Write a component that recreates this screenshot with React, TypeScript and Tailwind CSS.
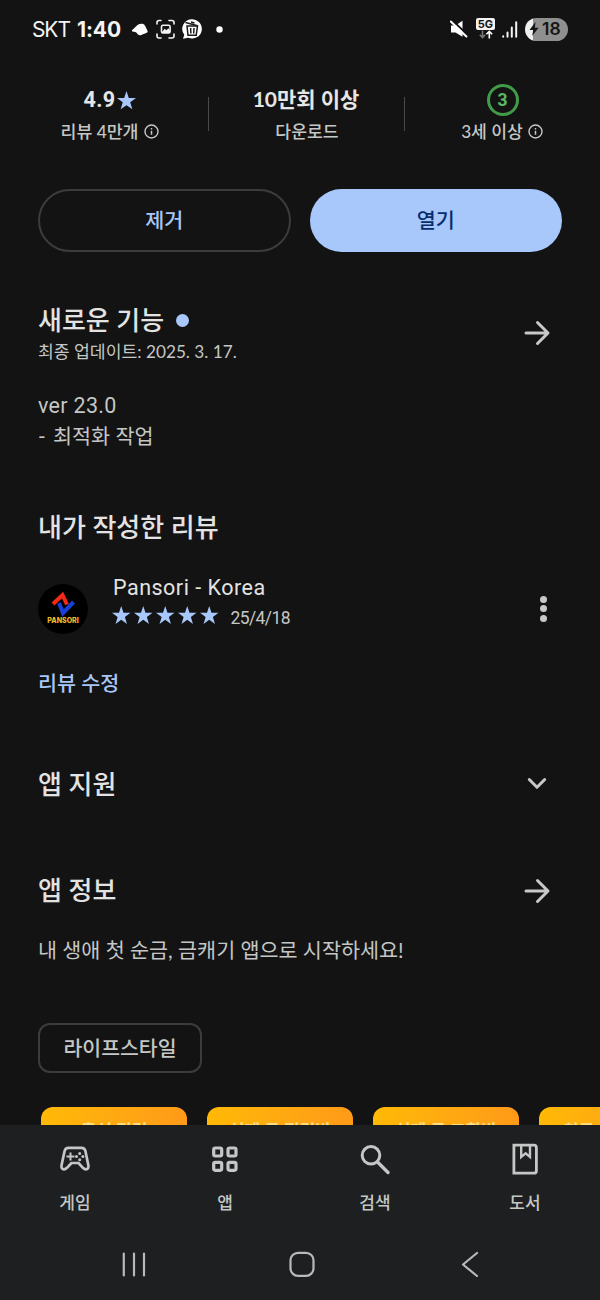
import React from 'react';

const STAR = 'M12 0l2.9 8.7 9.1.1-7.3 5.5 2.7 8.9-7.4-5.3-7.4 5.3 2.7-8.9L0 8.8l9.1-.1z';

const Star: React.FC<{ size: number }> = ({ size }) => (
  <svg width={size} height={size} viewBox="0 0 24 24" fill="#a8c7fa">
    <path d={STAR} />
  </svg>
);

const InfoIcon: React.FC = () => (
  <svg width="15" height="15" viewBox="0 0 15 15" fill="none" stroke="#c4c7c5">
    <circle cx="7.5" cy="7.5" r="6.5" strokeWidth="1.4" />
    <path d="M7.5 6.7v4.1M7.5 4v1.5" strokeWidth="1.5" />
  </svg>
);

const ArrowIcon: React.FC = () => (
  <svg width="28" height="28" viewBox="0 0 28 28" fill="none" stroke="#c8c8c8" strokeWidth="3" strokeLinecap="round" strokeLinejoin="round">
    <path d="M3 14h21M14.5 3.5L25 14 14.5 24.5" />
  </svg>
);

const StatusBar: React.FC = () => (
  <div className="h-[58px] flex items-center justify-between px-8 text-[#f4f4f4]">
    <div className="flex items-center">
      <span className="font-['Inter',sans-serif] text-[21px] tracking-[-1.1px] w-[45px] mt-px">SKT</span>
      <span className="font-['Inter',sans-serif] text-[21px] font-bold w-[54px] tracking-[-0.1px] mt-px">1:40</span>
      {/* Notification icons */}
      <svg width="92" height="24" viewBox="0 0 92 24" className="-mt-px">
        <path d="M1 13.2L6.5 8q2.5-1.6 5-1.3 1.9.3 2.7 2.3l2.4 5q.4 1.2-.8 1.8l-5.6 2.3q-2 .6-3.2-.5L5 15.3l-3.4-.8q-1.2-.4-.6-1.3z" fill="#fff" />
        <g fill="none" stroke="#f4f4f4" strokeWidth="1.6" strokeLinecap="round">
          <path d="M26 7V5.5q0-2 2-2h2M38 3.5h3q2 0 2 2V7M26 17v2q0 2 2 2h2M38 21h3q2 0 2-2v-2" />
          <rect x="30.5" y="8.2" width="8.6" height="7.8" rx="1.5" />
        </g>
        <path d="M31 15l2.7-3.3 1.7 1.6 2-2 1.6 2.2V16h-8z" fill="#f4f4f4" />
        <path d="M60.2 2.3a9.8 9.6 0 11-3 18.4l-5.2 1 1.3-4A9.8 9.6 0 0160.2 2.3z" fill="#fff" />
        <g fill="none" stroke="#1b1b1b" strokeWidth="1.5">
          <path d="M56 9l1 9.3h8.2l1.3-9.3z" />
          <path d="M54.5 5.5l12 3.3M60 5l3.5 1M59.6 11l.3 5.5M63 11l-.3 5.5" />
        </g>
        <circle cx="88.5" cy="12.5" r="3.2" fill="#fff" />
      </svg>
    </div>
    <div className="flex items-center">
      <svg width="18" height="18" viewBox="0 0 18 18" className="mr-[8px]">
        <path d="M1 5.500h4.500L12.500.8v16L5.500 12.500H1z" fill="#fff" />
        <path d="M1.500-.5l16.500 16" stroke="#131313" strokeWidth="2" />
        <path d="M.8 1.5l15.6 15" stroke="#fff" strokeWidth="2" strokeLinecap="round" />
      </svg>
      <div className="flex flex-col items-center w-[19px] h-[22px] mr-[7px]">
        <span className="w-[19px] h-[12px] rounded-[2px] bg-[#f4f4f4] text-[#151515] font-['Inter',sans-serif] font-bold text-[11px] leading-[12px] text-center">5G</span>
        <svg width="14" height="9" viewBox="0 0 14 9" fill="none" strokeWidth="1.6">
          <path d="M3.5.5v7M.8 4.8l2.7 2.9 2.7-2.9" stroke="#777" />
          <path d="M10.3 8.5v-7M7.4 4.3l2.9-2.9 2.9 2.9" stroke="#fff" />
        </svg>
      </div>
      <svg width="16" height="17" viewBox="0 0 16 17" stroke="#f4f4f4" strokeWidth="2" strokeLinecap="round" className="mr-[7px]">
        <path d="M1.2 15.2v.5M5.5 11.5v4.2M9.8 6.5v9.2M14.2 1.2v14.5" />
      </svg>
      <div className="w-[43px] h-[23px] rounded-full bg-linear-to-r from-[#efefef] from-18% to-[#8f8f8f] to-18% flex items-center pl-[4px]">
        <svg width="10" height="14" viewBox="0 0 10 14">
          <path d="M6.5 0L.5 8h3.7l-1 6L9.5 5.8H5.8z" fill="#151515" />
        </svg>
        <span className="font-['Inter',sans-serif] font-semibold text-[17.5px] leading-none text-[#151515] ml-[3px]">18</span>
      </div>
    </div>
  </div>
);

const Stats: React.FC = () => (
  <div className="h-[131px] pl-3 pt-[26px] flex text-[#c4c7c5]">
    <div className="w-[196px] flex flex-col items-center">
      <div className="h-8 flex items-center gap-[2px] text-[21.5px] font-bold text-[#e6e6e6]">
        <span className="font-['Roboto',sans-serif] tracking-[0.3px]">4.9</span>
        <Star size={19} />
      </div>
      <div className="h-[31px] flex items-center gap-[6px] text-[17.3px] font-medium">리뷰 4만개 <InfoIcon /></div>
    </div>
    <div className="w-px h-[34px] mt-[13px] -mr-px bg-[#4a4a4a]" />
    <div className="w-[196px] flex flex-col items-center">
      <div className="h-8 flex items-center -mt-px mb-px text-[21px] font-bold text-[#e6e6e6]">10만회 이상</div>
      <div className="h-[31px] flex items-center pl-[2px] text-[17.2px] font-medium">다운로드</div>
    </div>
    <div className="w-px h-[34px] mt-[13px] -mr-px bg-[#4a4a4a]" />
    <div className="w-[196px] flex flex-col items-center">
      <div className="h-8 flex items-center">
        <div className="w-8 h-8 ml-px rounded-full border-[3px] border-[#429b46] text-[#5bb763] font-['Roboto',sans-serif] text-[17.5px] font-bold flex items-center justify-center">3</div>
      </div>
      <div className="h-[31px] flex items-center gap-[5px] text-[17.2px] font-medium">3세 이상 <InfoIcon /></div>
    </div>
  </div>
);

const PANELS = ['출석 적립', '실제 금 적립방', '실제 금 교환방', '친구 초대하기'];

const NAV_ITEMS = [
  {
    label: '게임',
    icon: (
      <>
        <path d="M10.5 5.8h13q3.2 0 3.9 3.2l3 14.5q.5 3.7-2.5 3.8-1.5 0-3-1.5L20.5 21h-7L9 25.8q-1.5 1.5-3 1.5-3-.1-2.5-3.8L6.6 9q.7-3.2 3.9-3.2z" strokeWidth="2.7" strokeLinejoin="round" />
        <path d="M8.5 14.600h8M12.5 10.600v8" strokeWidth="2" />
        <g fill="#c4c7c5" stroke="none">
          <circle cx="21.7" cy="11.5" r="1.5" />
          <circle cx="18.5" cy="14.6" r="1.5" />
          <circle cx="24.9" cy="14.6" r="1.5" />
          <circle cx="21.7" cy="17.7" r="1.5" />
        </g>
      </>
    ),
  },
  {
    label: '앱',
    icon: (
      <g strokeWidth="3.2">
        <rect x="5.7" y="6" width="8" height="8" rx="1.7" />
        <rect x="20" y="6" width="8" height="8" rx="1.7" />
        <rect x="5.7" y="20.3" width="8" height="8" rx="1.7" />
        <rect x="20" y="20.3" width="8" height="8" rx="1.7" />
      </g>
    ),
  },
  {
    label: '검색',
    icon: (
      <>
        <circle cx="13" cy="13.3" r="8.8" strokeWidth="3" />
        <path d="M19.5 20l10.5 10.5" strokeWidth="3.4" strokeLinecap="round" />
      </>
    ),
  },
  {
    label: '도서',
    icon: (
      <>
        <path d="M5.9 3.2h20q2.5 0 2.5 2.5v23q0 2.500-2.500 2.500h-20z" strokeWidth="2.8" />
        <path d="M13.2 3v12l4.400-3.600 4.400 3.600V3" strokeWidth="2.4" />
      </>
    ),
  },
];

export default function App() {
  return (
    <div className="w-[600px] h-[1300px] bg-[#131313] overflow-hidden flex flex-col font-['Lato','Noto_Sans_CJK_KR',sans-serif]">
      <StatusBar />
      <Stats />

      <div className="flex gap-[19px] px-[38px] text-[20.7px] font-medium">
        <button className="h-[63px] w-[253px] rounded-full border-2 border-[#3c3c3c] text-[#a8c7fa]">제거</button>
        <button className="h-[63px] w-[253px] rounded-full bg-[#a8c7fa] text-[#062e6f]">열기</button>
      </div>

      {/* What's new */}
      <section className="h-[248px] pt-[49px] px-[38px]">
        <div className="flex items-center justify-between">
          <div>
            <h2 className="h-[38px] flex items-center gap-[12px] text-[26px] font-medium text-[#e3e3e3]">
              새로운 기능 <span className="w-[13px] h-[13px] rounded-full bg-[#a8c7fa]" />
            </h2>
            <p className="h-[26px] leading-[26px] text-[17.2px] text-[#c4c7c5]">최종 업데이트: 2025. 3. 17.</p>
          </div>
          <button className="mr-[11px]"><ArrowIcon /></button>
        </div>
        <p className="mt-[25px] text-[20.7px] leading-[31px] text-[#c4c7c5]">
          <span className="font-['Roboto',sans-serif] text-[21.5px] tracking-[0.3px]">ver 23.0</span><br />
          <span className="mr-[2px]">-</span> 최적화 작업
        </p>
      </section>

      {/* My review */}
      <section className="h-[246px] px-[38px]">
        <h2 className="h-[54px] flex items-center text-[26px] font-medium text-[#e3e3e3]">내가 작성한 리뷰</h2>
        <div className="mt-[19px] h-[63px] flex items-center">
          <div className="w-[50px] h-[50px] mt-[8px] rounded-full bg-black flex flex-col items-center">
            <svg width="26" height="27" viewBox="0 0 26 27" fill="none" strokeWidth="4" className="mt-[6px]">
              <path d="M3 14L12.5 5l4.500 9.500" stroke="#f52a16" />
              <path d="M9 13l4 10L23.500 12" stroke="#1740d8" />
            </svg>
            <span className="font-['Inter',sans-serif] font-extrabold text-[7px] leading-[8px] text-[#f4b929]">PANSORI</span>
          </div>
          <div className="ml-[25px] -mt-[6px] flex-1 font-['Roboto',sans-serif]">
            <div className="h-[31px] leading-[31px] text-[21.5px] tracking-[0.5px] text-[#e3e3e3]">Pansori - Korea</div>
            <div className="h-[29px] flex items-center">
              <div className="flex gap-[3.5px] -ml-px -mt-[4px]">
                {[0, 1, 2, 3, 4].map((i) => <Star key={i} size={18.5} />)}
              </div>
              <span className="ml-[12px] mt-[2px] text-[17.5px] tracking-[-0.6px] text-[#c4c7c5]">25/4/18</span>
            </div>
          </div>
          <button className="mr-[15.5px] mt-[8px] flex flex-col gap-[2.5px]">
            <span className="w-[7px] h-[7px] rounded-full bg-[#c8c8c8]" />
            <span className="w-[7px] h-[7px] rounded-full bg-[#c8c8c8]" />
            <span className="w-[7px] h-[7px] rounded-full bg-[#c8c8c8]" />
          </button>
        </div>
        <button className="block mt-[31px] h-8 leading-8 text-[20.7px] font-medium text-[#a8c7fa]">리뷰 수정</button>
      </section>

      <section className="h-[50px] mt-[13px] px-[38px] flex items-center justify-between">
        <h2 className="text-[26px] font-medium text-[#e3e3e3]">앱 지원</h2>
        <svg width="20" height="14" viewBox="0 0 20 14" fill="none" stroke="#c8c8c8" strokeWidth="3" strokeLinecap="round" strokeLinejoin="round" className="mr-[15px]">
          <path d="M2.3 2.5L10 10.3 17.7 2.5" />
        </svg>
      </section>

      {/* About */}
      <section className="mt-[56px] px-[38px]">
        <div className="h-[50px] flex items-center justify-between">
          <h2 className="text-[26px] font-medium text-[#e3e3e3]">앱 정보</h2>
          <button className="mr-[11px] mt-px"><ArrowIcon /></button>
        </div>
        <p className="mt-[19px] h-8 leading-8 text-[20.7px] text-[#c4c7c5]">내 생애 첫 순금, 금캐기 앱으로 시작하세요!</p>
        <div className="mt-[57px] w-[164px] h-[50px] rounded-[12px] border-2 border-[#3c3c3c] flex items-center justify-center text-[20.5px] font-medium text-[#c4c7c5]">
          라이프스타일
        </div>
      </section>

      {/* Screenshot strip, runs under the tab bar */}
      <div className="mt-[34px] h-[18px] pl-[41px] flex gap-5 overflow-hidden">
        {PANELS.map((title) => (
          <div key={title} className="w-[146px] h-[260px] shrink-0 rounded-[12px] bg-linear-to-r from-[#ffb905] to-[#ff9a18] pt-[14px] text-center text-[17px] leading-[20px] font-bold text-[#ffe08a]">
            {title}
          </div>
        ))}
      </div>

      <footer className="h-[175px] bg-[#1e1f21] text-[#c4c7c5]">
        <nav className="h-[105px] grid grid-cols-4">
          {NAV_ITEMS.map((item) => (
            <button key={item.label} className="flex flex-col items-center pt-[17px]">
              <svg width="34" height="34" viewBox="0 0 34 34" fill="none" stroke="#c4c7c5">{item.icon}</svg>
              <span className="mt-[14px] text-[17px] leading-[26px] font-medium">{item.label}</span>
            </button>
          ))}
        </nav>
        <div className="h-[70px] flex justify-between pl-[121px] pr-[118px] pt-[21px]">
          <svg width="26" height="26" viewBox="0 0 26 26" stroke="#b9b9b9" strokeWidth="2.2" strokeLinecap="round">
            <path d="M2.8 2.500v22M13 2.500v22M23 2.500v22" />
          </svg>
          <svg width="26" height="26" viewBox="0 0 26 26" fill="none" stroke="#b9b9b9" strokeWidth="2.2">
            <rect x="1.5" y="1.8" width="23" height="23" rx="7.5" />
          </svg>
          <svg width="26" height="26" viewBox="0 0 26 26" fill="none" stroke="#b9b9b9" strokeWidth="2.2" strokeLinecap="round" strokeLinejoin="round">
            <path d="M21 2L7 13.500l14 11.500" />
          </svg>
        </div>
      </footer>
    </div>
  );
}
